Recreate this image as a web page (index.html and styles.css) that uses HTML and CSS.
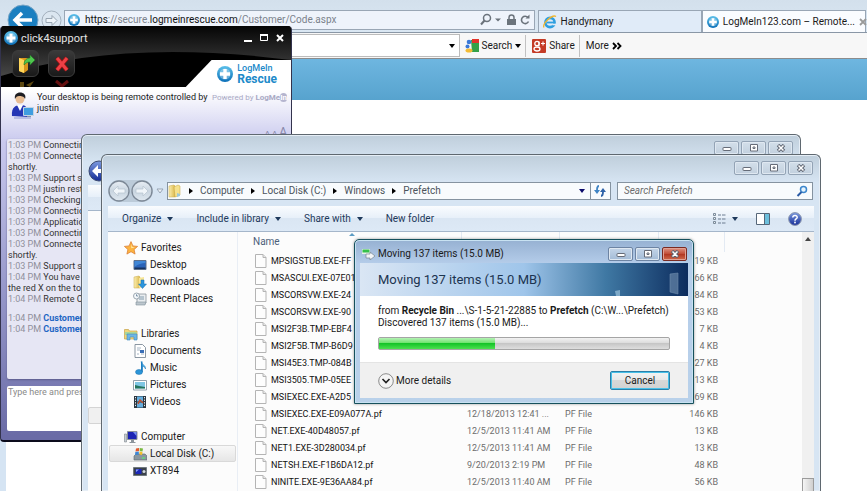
FILE: index.html
```html
<!DOCTYPE html>
<html lang="en">
  <head>
    <meta charset="UTF-8" />
    <title>Remote desktop</title>
    <link rel="stylesheet" href="styles.css">
  </head>
  <body>
    <!-- shared icons -->
    <svg class="sprite">
      <defs>
        <linearGradient id="blueBall" x1="0" y1="0" x2="0" y2="1">
          <stop offset="0" stop-color="#5cc0ea" />
          <stop offset="1" stop-color="#0b6fb8" />
        </linearGradient>
        <linearGradient id="helpBall" x1="0" y1="0" x2="0" y2="1">
          <stop offset="0" stop-color="#7d9be0" />
          <stop offset="1" stop-color="#142c96" />
        </linearGradient>
        <linearGradient id="glass" x1="0" y1="0" x2="0" y2="1">
          <stop offset="0" stop-color="#e9eff5" />
          <stop offset="0.5" stop-color="#c9d5e0" />
          <stop offset="1" stop-color="#dfe8f0" />
        </linearGradient>
        <linearGradient id="folder" x1="0" y1="0" x2="1" y2="0">
          <stop offset="0" stop-color="#fbeeb0" />
          <stop offset="1" stop-color="#dcb94c" />
        </linearGradient>
        <linearGradient id="headerTop" x1="0" y1="0" x2="0" y2="1">
          <stop offset="0" stop-color="#050505" />
          <stop offset="1" stop-color="#474747" />
        </linearGradient>
      </defs>
      <symbol id="plus" viewBox="0 0 16 16">
        <circle cx="8" cy="8" r="8" fill="url(#blueBall)" />
        <circle cx="8" cy="8" r="5.600" fill="#e8f6fd" opacity="0.35" />
        <path d="M6.300 3h3.400v3.300H13v3.400H9.700V13H6.300V9.700H3V6.300h3.300z" fill="#fff" />
      </symbol>
      <symbol id="min" viewBox="0 0 12 8">
        <rect x="2" y="3.500" width="8" height="3" rx="0.500" fill="#fff" stroke="#666c78" />
      </symbol>
      <symbol id="max" viewBox="0 0 12 8">
        <path d="M2.500 0.500h7v6.500h-7z" fill="#fff" stroke="#666c78" />
        <path d="M5 3h2v1.500H5z" fill="#fff" stroke="#666c78" />
      </symbol>
      <symbol id="close" viewBox="0 0 12 8">
        <path d="M3 1l6 6M9 1l-6 6" stroke="#5d6370" stroke-width="3.400" />
        <path d="M3.500 1.500l5 5M8.500 1.500l-5 5" stroke="#fff" stroke-width="1.500" />
      </symbol>
      <symbol id="page" viewBox="0 0 12 14">
        <path d="M0.500 0.500h7.500l3 3v10h-10.500z" fill="#fdfdfd" stroke="#b4b4b4" />
        <path d="M8 0.500v3h3" fill="#e6e6e6" stroke="#b4b4b4" />
      </symbol>
      <symbol id="folderIcon" viewBox="0 0 14 14">
        <path d="M1 2l5-1 1 1v11H1z" fill="url(#folder)" stroke="#c9a94a" stroke-width="0.500" />
        <path d="M6 3l4-2 2 1v9l-5 2z" fill="#f6e28d" stroke="#c4a23e" stroke-width="0.500" />
        <path d="M9 9l3 1v2l-3 1z" fill="#9cc8d8" />
      </symbol>
      <symbol id="star" viewBox="0 0 14 14">
        <path d="M7 0.600l1.900 4.300 4.700 0.500-3.500 3.100 1 4.600L7 10.700l-4.100 2.400 1-4.600L0.400 5.400l4.700-0.500z" fill="#fcb340" stroke="#d9762a" stroke-width="0.700" />
        <path d="M7 2.800l1 3 2.800 0.400-3.500 1z" fill="#ffe9a8" />
      </symbol>
      <symbol id="desktop" viewBox="0 0 14 14">
        <path d="M1 2.500h12v9H1z" fill="#2a63b8" stroke="#5c6f8a" />
        <path d="M1.500 3h11v2c-4 0-7 1-11 4z" fill="#3f86d6" />
        <path d="M1.500 9.500h11V11h-11z" fill="#16335f" />
      </symbol>
      <symbol id="download" viewBox="0 0 14 14">
        <path d="M1 2l5-1 1 1v11H1z" fill="url(#folder)" stroke="#c9a94a" stroke-width="0.500" />
        <path d="M6 3l5-1v9l-5 2z" fill="#f8e596" />
        <path d="M8 5h3v4h2.500L9.500 13.500 5.500 9H8z" fill="#2b95dd" stroke="#1468a8" stroke-width="0.500" />
      </symbol>
      <symbol id="recent" viewBox="0 0 14 14">
        <path d="M4 2h9v9H4z" fill="#e9edf0" stroke="#8a949c" stroke-width="0.800" />
        <path d="M6 4h5v4H6z" fill="#b5c4cf" />
        <path d="M3 10h10l-1 3H3z" fill="#bcc6cd" stroke="#82909a" stroke-width="0.600" />
        <circle cx="3.500" cy="4" r="3" fill="#f4f8fb" stroke="#8996a0" stroke-width="0.800" />
        <path d="M3.500 2.300V4H5" fill="none" stroke="#4b6a86" stroke-width="0.700" />
      </symbol>
      <symbol id="library" viewBox="0 0 14 14">
        <path d="M0.500 2.500h4l1 1.500h7.500v8H0.500z" fill="#f2d67a" stroke="#c7a447" stroke-width="0.700" />
        <path d="M1 5h11.500v3H1z" fill="#a8d69c" />
        <path d="M3 7h10v6H10v-3H6v3H3z" fill="#6fb6e4" stroke="#3d8ac0" stroke-width="0.600" />
      </symbol>
      <symbol id="document" viewBox="0 0 14 14">
        <path d="M2 0.500h7.500l3 3v10H2z" fill="#fff" stroke="#7e8b97" stroke-width="0.900" />
        <path d="M4 4h4M4 6h3M4 10h2M8 10h3" stroke="#a6b5c4" />
        <path d="M7 6h4v3H7z" fill="#3a6fb7" />
      </symbol>
      <symbol id="music" viewBox="0 0 14 14">
        <path d="M8 0.500c0.500 3 5 3.500 4.500 7.500-1-2-2-2.700-3-2.700V11" fill="#4fb0e8" stroke="#1b71ae" stroke-width="0.500" />
        <path d="M8 0.500h1.500V11H8z" fill="#1b7fc4" />
        <ellipse cx="6" cy="11" rx="3.500" ry="2.500" fill="#2b95d8" stroke="#1b71ae" stroke-width="0.500" />
      </symbol>
      <symbol id="picture" viewBox="0 0 14 14">
        <path d="M0.500 2.500h13v9.500H0.500z" fill="#fff" stroke="#8796a4" stroke-width="0.900" />
        <path d="M2 4h10v6.500H2z" fill="#7fc6e4" />
        <path d="M2 7l4 1 6 1v1.500H2z" fill="#23745e" />
      </symbol>
      <symbol id="video" viewBox="0 0 14 14">
        <path d="M1 1h12v12H1z" fill="#2b3640" />
        <path d="M4 1.500h6v5H4zM4 7.500h6v5H4z" fill="#65aede" />
        <path d="M2.500 2v10M11.500 2v10" stroke="#e8edf0" stroke-dasharray="1.300 1.300" />
        <path d="M5 9l2-4 3 3" fill="none" stroke="#c1502e" stroke-width="1.500" />
      </symbol>
      <symbol id="computer" viewBox="0 0 14 14">
        <path d="M3.500 1.500h9.500v8H3.500z" fill="#1c24b4" stroke="#8b929a" />
        <path d="M9 2h3.500v4z" fill="#7590f0" />
        <path d="M7 10h3v2H7zM5.500 12h6v1h-6z" fill="#8d959c" />
        <path d="M0.500 4h2v8h-2z" fill="#c6cdd2" stroke="#7f888f" stroke-width="0.600" />
      </symbol>
      <symbol id="disk" viewBox="0 0 14 14">
        <path d="M1 9l2-2h9l2 2v4H1z" fill="#8a979f" stroke="#58666e" stroke-width="0.600" />
        <path d="M9 11h3" stroke="#5fe07c" stroke-width="1.400" />
        <path d="M3 1.500l3-0.500v3l-3.500 0.500z" fill="#e2582d" />
        <path d="M6.700 1l3.300 0.500-0.500 3-2.800-0.500z" fill="#79b940" />
        <path d="M2.300 5l3.500-0.500v3L2 8z" fill="#3a86d6" />
        <path d="M6.500 4.500l3 0.500-0.500 3-2.500-0.500z" fill="#f4bf2d" />
      </symbol>
      <symbol id="camera" viewBox="0 0 14 14">
        <path d="M0.500 3.500h13v8H0.500z" fill="#3b424a" stroke="#70787f" />
        <path d="M2.500 5h6v5h-6z" fill="#1c28b8" />
        <path d="M3 5.500h3L3 8z" fill="#8da4f4" />
        <circle cx="11" cy="7.500" r="1.500" fill="#cfd6dc" />
      </symbol>
      <symbol id="navLeft" viewBox="0 0 22 22">
        <circle cx="11" cy="11" r="10" fill="url(#glass)" stroke="#7c8896" stroke-width="1.300" />
        <path d="M5 11l5-5v3h7v4h-7v3z" fill="#f0f5f9" stroke="#b6c3cf" stroke-width="0.700" />
      </symbol>
      <symbol id="navRight" viewBox="0 0 22 22">
        <circle cx="11" cy="11" r="10" fill="url(#glass)" stroke="#7c8896" stroke-width="1.300" />
        <path d="M17 11l-5-5v3H5v4h7v3z" fill="#f0f5f9" stroke="#b6c3cf" stroke-width="0.700" />
      </symbol>
    </svg>

    <div class="desktop">
      <!-- Internet Explorer -->
      <div class="browser">
        <header class="browser-top">
          <div class="browser-nav">
            <button class="nav-btn" aria-label="Back">
              <svg width="32" height="32" viewBox="0 0 32 32">
                <circle cx="16" cy="16" r="15" fill="#1b7fc0" stroke="#7aa6c6" />
                <path d="M25 16H9M15 9l-7 7 7 7" fill="none" stroke="#fff" stroke-width="3.500" />
              </svg>
            </button>
            <button class="nav-btn" aria-label="Forward">
              <svg width="21" height="21" viewBox="0 0 21 21">
                <circle cx="10.500" cy="10.500" r="9.500" fill="#dbe6f0" stroke="#a3b0bd" />
                <path d="M16 10.500l-5-5v3H5v4h6v3z" fill="#eef4f9" stroke="#97a4b1" />
              </svg>
            </button>
          </div>
          <div class="address">
            <svg class="ico12"><use href="#plus" /></svg>
            <span class="url">https<i>://secure.</i>logmeinrescue.com<i>/Customer/Code.aspx</i></span>
            <svg width="52" height="14" viewBox="0 0 52 14">
              <circle cx="8" cy="5" r="3.500" fill="none" stroke="#6b737c" stroke-width="1.500" />
              <path d="M5.500 7.500L2 11.500" stroke="#6b737c" stroke-width="2" />
              <path d="M16 5.500h6l-3 3z" fill="#6b737c" />
              <path d="M28 6h9v6h-9z" fill="#6b737c" />
              <path d="M30 6V4.500a2.500 2.500 0 0 1 5 0V6" fill="none" stroke="#6b737c" stroke-width="1.500" />
              <path d="M49 4.500A3.700 3.700 0 1 0 49.500 8.500" fill="none" stroke="#6b737c" stroke-width="1.600" />
              <path d="M50.500 1.500v4h-4z" fill="#6b737c" />
            </svg>
          </div>
          <a class="tab" href="#">
            <svg width="14" height="14" viewBox="0 0 14 14">
              <circle cx="7" cy="7.500" r="4.600" fill="none" stroke="#2e9fe0" stroke-width="2.600" />
              <path d="M4 7.500h8" stroke="#2e9fe0" stroke-width="1.800" />
              <path d="M9.500 9.500h4" stroke="#e2ecf6" stroke-width="1.600" />
              <path d="M1 12.500C-1 9 9-1 13 1.500" fill="none" stroke="#f0b52e" stroke-width="1.300" />
            </svg>
            <span>Handymany</span>
          </a>
          <a class="tab active" href="#">
            <svg class="ico12"><use href="#plus" /></svg>
            <span>LogMeIn123.com – Remote...</span>
            <svg width="8" height="8" viewBox="0 0 8 8">
              <path d="M1 1l6 6M7 1L1 7" stroke="#9a9a9a" stroke-width="1.800" />
            </svg>
          </a>
        </header>
        <div class="google-bar">
          <div class="combo">
            <input type="text" aria-label="Google search" />
            <i class="caret black"></i>
          </div>
          <button class="bar-btn">
            <svg width="14" height="14" viewBox="0 0 14 14">
              <path d="M6 1h8v12H7z" fill="#34a148" />
              <path d="M7 0h7v4H7z" fill="#e3342b" />
              <circle cx="4" cy="3" r="2.300" fill="#3a78d8" />
              <circle cx="2.500" cy="7.500" r="2" fill="#3a78d8" />
              <ellipse cx="4" cy="11.500" rx="3.500" ry="2" fill="#f3bb35" />
            </svg>
            Search <i class="caret black"></i>
          </button>
          <span class="bar-sep"></span>
          <button class="bar-btn">
            <svg width="14" height="14" viewBox="0 0 14 14">
              <rect width="14" height="14" rx="1" fill="#c43b26" />
              <circle cx="5" cy="4.500" r="2.200" fill="none" stroke="#fff" stroke-width="1.300" />
              <ellipse cx="5" cy="10" rx="3" ry="2" fill="none" stroke="#fff" stroke-width="1.300" />
              <path d="M7 2.500v5M9 4.500h4M11 2.500v4" stroke="#fff" stroke-width="1.100" />
            </svg>
            Share
          </button>
          <span class="bar-sep"></span>
          <button class="bar-btn">More
            <svg width="10" height="8" viewBox="0 0 10 8">
              <path d="M1 1l3 3-3 3M5.500 1l3 3-3 3" fill="none" stroke="#000" stroke-width="1.800" />
            </svg>
          </button>
        </div>
        <main class="page">
          <div class="banner"></div>
        </main>
      </div>

      <!-- click4support chat -->
      <section class="support">
        <header class="support-head">
          <svg class="support-bg" viewBox="0 0 292 61" preserveAspectRatio="none">
            <path d="M0 0h292v61H0z" fill="#000" />
            <path d="M0 0h292v34Q120 12 0 50z" fill="url(#headerTop)" />
            <path d="M186 61l26-27h80v27z" fill="#fff" />
          </svg>
          <div class="support-title">
            <svg class="ico14"><use href="#plus" /></svg>
            <span>click4support</span>
            <svg width="42" height="10" viewBox="0 0 42 10">
              <path d="M1 8h8" stroke="#fff" stroke-width="2" />
              <path d="M17.500 1.500h7v6h-7z" fill="none" stroke="#fff" />
              <path d="M17 2h8" stroke="#fff" stroke-width="2" />
              <path d="M34 2l6 6M40 2l-6 6" stroke="#fff" stroke-width="2" />
            </svg>
          </div>
          <div class="support-tools">
            <button class="tool" aria-label="Send file">
              <svg width="18" height="20" viewBox="0 0 18 20">
                <path d="M2 4h9v12l-4 3-5-2z" fill="#d9951c" />
                <path d="M2 4l5 2v13l-5-2z" fill="#ffd65a" />
                <path d="M7 11c0-5 3-7 6-7V1l5 5-5 5V8c-3 0-4 1-6 3z" fill="#4fc64e" stroke="#237c29" stroke-width="0.600" />
              </svg>
            </button>
            <button class="tool" aria-label="End session">
              <svg width="18" height="18" viewBox="0 0 18 18">
                <path d="M4 3l10 12M14 3L4 15" stroke="#9c1212" stroke-width="4.600" />
                <path d="M4 3l10 12M14 3L4 15" stroke="#ec4046" stroke-width="3" />
              </svg>
            </button>
            <div class="rescue">
              <svg class="ico16"><use href="#plus" /></svg>
              <div><small>LogMeIn</small><strong>Rescue</strong></div>
            </div>
          </div>
          <svg class="reflection" viewBox="0 0 80 8">
            <path d="M19 8V3h4v5M25 6l8-4-4 6" fill="#5c4710" />
            <path d="M55 2l6 5 6-5" fill="none" stroke="#65100f" stroke-width="3" />
          </svg>
        </header>
        <div class="support-info">
          <svg width="24" height="30" viewBox="0 0 24 30">
            <path d="M1 24c-1-9 4-11 9-11s8 3 7 12z" fill="#2536b5" />
            <path d="M6 13l3 6 3-6z" fill="#fff" />
            <circle cx="9" cy="7" r="4.500" fill="#e8bd94" />
            <path d="M4 7C2-2 17-1 14 7c-1-3-4-3-6-3-2 0-3 1-4 3z" fill="#1d1d22" />
            <path d="M12.500 15.500h10v8h-10z" fill="#3f9de0" stroke="#c5d4e2" />
            <path d="M16 24h4v2h-4z" fill="#7f93ab" />
            <path d="M3 26h17" stroke="#b8bde4" stroke-width="2" />
          </svg>
          <p>Your desktop is being remote controlled by<br>justin</p>
          <div class="powered">
            <span>Powered by <b>LogMe<em>In</em></b></span>
            <span class="sizes"><i>A</i><i>A</i><i>A</i></span>
          </div>
        </div>
        <ul class="chat">
          <li><time>1:03 PM</time> Connecting</li>
          <li><time>1:03 PM</time> Connected<br>shortly.</li>
          <li><time>1:03 PM</time> Support s...</li>
          <li><time>1:03 PM</time> justin rest...</li>
          <li><time>1:03 PM</time> Checking</li>
          <li><time>1:03 PM</time> Connection</li>
          <li><time>1:03 PM</time> Application</li>
          <li><time>1:03 PM</time> Connecting</li>
          <li><time>1:03 PM</time> Connected<br>shortly.</li>
          <li><time>1:03 PM</time> Support s...</li>
          <li><time>1:04 PM</time> You have<br>the red X on the to...</li>
          <li><time>1:04 PM</time> Remote C...</li>
          <li class="customer"><time>1:04 PM</time> <b>Customer</b></li>
          <li><time>1:04 PM</time> <b>Customer</b></li>
        </ul>
        <textarea class="chat-input" aria-label="Message" placeholder="Type here and press"></textarea>
      </section>

      <!-- explorer window at the back -->
      <section class="explorer explorer-back">
        <div class="win-btns">
          <button aria-label="Minimize"><svg><use href="#min" /></svg></button>
          <button aria-label="Maximize"><svg><use href="#max" /></svg></button>
          <button aria-label="Close"><svg><use href="#close" /></svg></button>
        </div>
        <div class="back-nav">
          <svg width="22" height="22" viewBox="0 0 22 22">
            <circle cx="11" cy="11" r="10" fill="url(#helpBall)" stroke="#3b4a72" />
            <path d="M4 11l6-6v4h7v4h-7v4z" fill="#fff" />
          </svg>
        </div>
        <div class="commands"></div>
        <div class="back-body"><span class="back-row"></span></div>
      </section>

      <!-- explorer window: Prefetch -->
      <section class="explorer explorer-front">
        <div class="win-btns">
          <button aria-label="Minimize"><svg><use href="#min" /></svg></button>
          <button aria-label="Maximize"><svg><use href="#max" /></svg></button>
          <button aria-label="Close"><svg><use href="#close" /></svg></button>
        </div>
        <div class="path-row">
          <div class="round-nav">
            <button class="nav-btn" aria-label="Back"><svg><use href="#navLeft" /></svg></button>
            <button class="nav-btn" aria-label="Forward"><svg><use href="#navRight" /></svg></button>
          </div>
          <svg width="8" height="6" viewBox="0 0 8 6"><path d="M1 1h6l-3 4z" fill="#eef3f8" stroke="#98a5b4" /></svg>
          <div class="path">
            <svg class="ico14"><use href="#folderIcon" /></svg>
            <i class="arrow"></i><a href="#">Computer</a>
            <i class="arrow"></i><a href="#">Local Disk (C:)</a>
            <i class="arrow"></i><a href="#">Windows</a>
            <i class="arrow"></i><a href="#">Prefetch</a>
            <i class="caret navy"></i>
            <button class="refresh" aria-label="Refresh">
              <svg width="12" height="12" viewBox="0 0 12 12">
                <path d="M5 1C3 1 3 3 3 6" fill="none" stroke="#3f84c4" stroke-width="1.800" />
                <path d="M0 5h6L3 9z" fill="#3f84c4" />
                <path d="M7 11c2 0 2-2 2-4" fill="none" stroke="#2d62a8" stroke-width="1.800" />
                <path d="M6 7h6L9 3z" fill="#2d62a8" />
              </svg>
            </button>
          </div>
          <div class="search">
            <input type="text" aria-label="Search Prefetch" placeholder="Search Prefetch" />
            <svg width="12" height="12" viewBox="0 0 12 12">
              <circle cx="7.500" cy="4.500" r="3" fill="#e6f4fd" stroke="#3c86cc" stroke-width="1.500" />
              <path d="M5.500 7L1.500 11" stroke="#2a5ba6" stroke-width="2" />
            </svg>
          </div>
        </div>
        <div class="commands">
          <button>Organize <i class="caret"></i></button>
          <button>Include in library <i class="caret"></i></button>
          <button>Share with <i class="caret"></i></button>
          <button>New folder</button>
          <div class="views">
            <button aria-label="Change view">
              <svg width="13" height="12" viewBox="0 0 13 12">
                <path d="M0.500 0.500h2v2h-2zM0.500 4.500h2v2h-2zM0.500 8.500h2v2h-2z" fill="#e9eef3" stroke="#71808f" stroke-width="0.900" />
                <path d="M5 2h3M9 2h3.500M5 6h3M9 6h3.500M5 10h3M9 10h3.500" stroke="#6c7d91" />
              </svg>
              <i class="caret"></i>
            </button>
            <button aria-label="Preview pane">
              <svg width="14" height="12" viewBox="0 0 14 12">
                <path d="M0.500 0.500h13v11H0.500z" fill="#fff" stroke="#566779" />
                <path d="M9 1h4v10H9z" fill="#6cbfdc" />
                <path d="M8.500 1v10" stroke="#566779" />
              </svg>
            </button>
            <button aria-label="Help">
              <svg width="14" height="14" viewBox="0 0 14 14">
                <circle cx="7" cy="7" r="6.400" fill="url(#helpBall)" stroke="#8e99ae" />
                <path d="M4.800 5.500c0-3 4.600-2.500 4.400 0C9 7 7 7 7 8.700" fill="none" stroke="#fff" stroke-width="1.500" />
                <circle cx="7" cy="10.500" r="0.900" fill="#fff" />
              </svg>
            </button>
          </div>
        </div>
        <div class="explorer-body">
          <nav class="tree">
            <ul>
              <li class="root"><svg><use href="#star" /></svg>Favorites</li>
              <li><svg><use href="#desktop" /></svg>Desktop</li>
              <li><svg><use href="#download" /></svg>Downloads</li>
              <li><svg><use href="#recent" /></svg>Recent Places</li>
            </ul>
            <ul>
              <li class="root"><svg><use href="#library" /></svg>Libraries</li>
              <li><svg><use href="#document" /></svg>Documents</li>
              <li><svg><use href="#music" /></svg>Music</li>
              <li><svg><use href="#picture" /></svg>Pictures</li>
              <li><svg><use href="#video" /></svg>Videos</li>
            </ul>
            <ul>
              <li class="root"><svg><use href="#computer" /></svg>Computer</li>
              <li class="selected"><svg><use href="#disk" /></svg>Local Disk (C:)</li>
              <li><svg><use href="#camera" /></svg>XT894</li>
            </ul>
          </nav>
          <div class="list">
            <table class="files">
              <thead>
                <tr>
                  <th class="col-name">Name<i class="sort"></i></th>
                  <th class="col-date"></th>
                  <th class="col-type"></th>
                  <th class="col-size"></th>
                  <th></th>
                </tr>
              </thead>
              <tbody>
                <tr><td><svg><use href="#page" /></svg>MPSIGSTUB.EXE-FF</td><td></td><td></td><td>19 KB</td><td></td></tr>
                <tr><td><svg><use href="#page" /></svg>MSASCUI.EXE-07E01</td><td></td><td></td><td>66 KB</td><td></td></tr>
                <tr><td><svg><use href="#page" /></svg>MSCORSVW.EXE-24</td><td></td><td></td><td>84 KB</td><td></td></tr>
                <tr><td><svg><use href="#page" /></svg>MSCORSVW.EXE-90</td><td></td><td></td><td>53 KB</td><td></td></tr>
                <tr><td><svg><use href="#page" /></svg>MSI2F3B.TMP-EBF4</td><td></td><td></td><td>7 KB</td><td></td></tr>
                <tr><td><svg><use href="#page" /></svg>MSI2F5B.TMP-B6D9</td><td></td><td></td><td>4 KB</td><td></td></tr>
                <tr><td><svg><use href="#page" /></svg>MSI45E3.TMP-084B</td><td></td><td></td><td>27 KB</td><td></td></tr>
                <tr><td><svg><use href="#page" /></svg>MSI3505.TMP-05EE</td><td></td><td></td><td>13 KB</td><td></td></tr>
                <tr><td><svg><use href="#page" /></svg>MSIEXEC.EXE-A2D5</td><td></td><td></td><td>69 KB</td><td></td></tr>
                <tr><td><svg><use href="#page" /></svg>MSIEXEC.EXE-E09A077A.pf</td><td>12/18/2013 12:41 ...</td><td>PF File</td><td>146 KB</td><td></td></tr>
                <tr><td><svg><use href="#page" /></svg>NET.EXE-40D48057.pf</td><td>12/5/2013 11:41 AM</td><td>PF File</td><td>13 KB</td><td></td></tr>
                <tr><td><svg><use href="#page" /></svg>NET1.EXE-3D280034.pf</td><td>12/5/2013 11:41 AM</td><td>PF File</td><td>13 KB</td><td></td></tr>
                <tr><td><svg><use href="#page" /></svg>NETSH.EXE-F1B6DA12.pf</td><td>9/20/2013 2:19 PM</td><td>PF File</td><td>48 KB</td><td></td></tr>
                <tr><td><svg><use href="#page" /></svg>NINITE.EXE-9E36AA84.pf</td><td>12/5/2013 11:40 AM</td><td>PF File</td><td>56 KB</td><td></td></tr>
              </tbody>
            </table>
          </div>
          <div class="scrollbar"><i class="up"></i><span class="thumb"></span></div>
        </div>
      </section>

      <!-- move progress dialog -->
      <section class="dialog">
        <div class="dialog-title">
          <svg width="13" height="12" viewBox="0 0 13 12">
            <path d="M0 1h8v5H0z" fill="#e9f3e9" />
            <path d="M0.500 1.500h7v3h-7z" fill="#35c04a" />
            <path d="M4 6h4V4l5 4-5 4v-2H4z" fill="#f2f5f7" stroke="#77858f" stroke-width="0.700" />
          </svg>
          <span>Moving 137 items (15.0 MB)</span>
          <div class="dialog-btns">
            <button aria-label="Minimize"><svg><use href="#min" /></svg></button>
            <button aria-label="Maximize" disabled><svg><use href="#max" /></svg></button>
            <button class="red" aria-label="Close"><svg><use href="#close" /></svg></button>
          </div>
        </div>
        <h1 class="dialog-head">
          Moving 137 items (15.0 MB)
          <svg width="76" height="33" viewBox="0 0 76 33">
            <path d="M58 11l8-1v21l-8-2z" fill="#7f9cba" opacity="0.55" stroke="#b9d0e4" stroke-width="0.600" />
            <path d="M4 33l-1-5 5-1v6z" fill="#9cc3dc" opacity="0.700" />
          </svg>
        </h1>
        <div class="dialog-main">
          <p>from <b>Recycle Bin</b> ...\S-1-5-21-22885 to <b>Prefetch</b> (C:\W...\Prefetch)</p>
          <p>Discovered 137 items (15.0 MB)...</p>
          <div class="progress" role="progressbar" aria-valuenow="40"><span style="width: 40%"></span></div>
        </div>
        <footer class="dialog-foot">
          <button class="more">
            <svg width="16" height="16" viewBox="0 0 16 16">
              <circle cx="8" cy="8" r="7.300" fill="#f4f4f4" stroke="#8b8b8b" />
              <path d="M4.500 6l3.500 3.500L11.500 6" fill="none" stroke="#222" stroke-width="1.700" />
            </svg>
            More details
          </button>
          <button class="cancel">Cancel</button>
        </footer>
      </section>
    </div>
  </body>
</html>
```
FILE: styles.css
```css
* {
  box-sizing: border-box;
}
html,
body {
  height: 100%;
  margin: 0;
}
body {
  font-family: Roboto, 'Open Sans', sans-serif;
  font-size: 10px;
  line-height: 12px;
  color: #1a1a1a;
}
ul,
p,
h1 {
  margin: 0;
  padding: 0;
  list-style: none;
}
button {
  font: inherit;
  color: inherit;
  padding: 0;
  border: none;
  background: none;
  display: flex;
  align-items: center;
}
input,
textarea {
  font: inherit;
  border: none;
  outline: none;
  padding: 0;
  background: transparent;
}
a {
  color: inherit;
  text-decoration: none;
}
svg {
  display: block;
  flex: none;
}
.sprite {
  position: absolute;
  width: 0;
  height: 0;
}
.ico12 {
  width: 12px;
  height: 12px;
}
.ico14 {
  width: 14px;
  height: 14px;
}
.ico16 {
  width: 16px;
  height: 16px;
}
.caret {
  border: 3px solid transparent;
  border-top: 4px solid #1e395b;
  border-bottom: none;
}
.caret.black {
  border-top-color: #000;
}
.caret.navy {
  border-top-color: #0a0a6a;
}

.desktop {
  position: relative;
  height: 100%;
  overflow: hidden;
}

/* browser */
.browser {
  height: 100%;
  display: flex;
  flex-direction: column;
  background: #fff;
}
.browser-top {
  display: flex;
  height: 33px;
  padding: 10px 1px 0 0;
  background: linear-gradient(#d3e0ec, #dae7f3);
  border-bottom: 1px solid #8a97a6;
}
.browser-nav {
  width: 64px;
  flex: none;
  display: flex;
  gap: 2px;
  height: 20px;
  align-items: center;
  padding-left: 7px;
}
.address {
  flex: 3 0 0;
  min-width: 0;
  height: 20px;
  display: flex;
  align-items: center;
  gap: 5px;
  padding: 0 3px;
  background: #eef3fb;
  border: 1px solid #99a6b5;
}
.url {
  flex: 1;
  color: #111;
  white-space: nowrap;
}
.url i {
  font-style: normal;
  color: #7b828b;
}
.tab {
  flex: 1 0 0;
  min-width: 0;
  display: flex;
  align-items: center;
  gap: 4px;
  padding: 0 4px;
  background: #e0ebf8;
  border: 1px solid #99a6b5;
  border-bottom: none;
  white-space: nowrap;
}
.address + .tab {
  margin-left: 3px;
}
.tab.active {
  background: #fafcff;
}
.tab span {
  flex: 1;
}
.google-bar {
  display: flex;
  align-items: center;
  height: 26px;
  background: #f7f7f7;
  border-bottom: 1px solid #8c8c8c;
}
.combo {
  width: 53%;
  height: 23px;
  display: flex;
  align-items: center;
  padding-right: 4px;
  margin-right: 5px;
  background: #fff;
  border: 1px solid #bcbcbc;
}
.combo input {
  flex: 1;
}
.bar-btn {
  gap: 3px;
}
.bar-sep {
  width: 1px;
  height: 22px;
  margin: 0 6px 0 4px;
  background: #c2c2c2;
}
.page {
  flex: 1;
  border-left: 6px solid #d5e4f3;
}
.banner {
  height: 41px;
  background: linear-gradient(#6eb6e0, #57a3ce);
}

/* click4support */
.support {
  position: absolute;
  left: 0;
  top: 26px;
  width: 292px;
  padding-bottom: 9px;
  font-size: 9px;
  line-height: 11px;
  border: 1px solid #33334d;
  border-top: none;
  border-bottom: 2px solid #0c0c1c;
  border-radius: 4px;
  overflow: hidden;
  background: linear-gradient(#fff 64px, #c9c9ee 116px, #9799cb 260px, #6a6ba6 410px);
}
.support-head {
  position: relative;
  height: 61px;
}
.support-bg {
  position: absolute;
  width: 100%;
  height: 100%;
}
.support-title {
  position: relative;
  display: flex;
  align-items: center;
  gap: 3px;
  height: 24px;
  padding: 0 6px 0 3px;
  font-size: 11px;
  color: #e4e4e4;
}
.support-title span {
  flex: 1;
}
.support-tools {
  position: relative;
  display: flex;
  gap: 9px;
  padding-left: 11px;
}
.tool {
  width: 27px;
  height: 27px;
  justify-content: center;
  border-radius: 6px;
  border: 1px solid #3c3c3c;
  background: linear-gradient(#3a3a3a, #191919);
}
.rescue {
  display: flex;
  align-items: center;
  gap: 4px;
  margin: 12px 14px 0 auto;
  height: 24px;
  color: #2089c9;
}
.rescue small,
.rescue strong {
  display: block;
  font-size: 9px;
  line-height: 10px;
  font-weight: 500;
}
.rescue strong {
  font-size: 12px;
  line-height: 12px;
  font-weight: 700;
}
.reflection {
  position: absolute;
  left: 0;
  bottom: 0;
  width: 80px;
  height: 8px;
}
.support-info {
  display: flex;
  gap: 2px;
  height: 52px;
  padding: 5px 4px 0 10px;
  white-space: nowrap;
}
.powered {
  display: flex;
  flex-direction: column;
  align-items: flex-end;
  justify-content: space-between;
  margin-left: auto;
  font-size: 8px;
  color: #a9a9c4;
}
.powered em {
  font-style: normal;
  color: #fff;
  background: #b5b5cf;
  border-radius: 5px;
}
.sizes {
  display: flex;
  align-items: baseline;
  gap: 2px;
  color: #8686a8;
}
.sizes i {
  font-style: normal;
}
.sizes i:last-child {
  font-size: 12px;
}
.chat {
  height: 240px;
  margin: 0 6px 7px;
  padding: 1px 1px;
  background: #e6e6f4;
  border-radius: 2px;
  box-shadow: 0 1px 2px #5c5c8c;
  color: #333;
}
.chat time {
  color: #8f8f9b;
}
.chat b {
  color: #1f66c4;
}
.chat .customer {
  margin-top: 8px;
}
.chat-input {
  display: block;
  width: calc(100% - 12px);
  height: 45px;
  margin: 0 6px;
  padding: 1px;
  resize: none;
  background: #fff;
  border-radius: 2px;
}
.chat-input::placeholder {
  color: #8a8a8a;
}

/* explorer */
.explorer {
  position: absolute;
  bottom: 0;
  display: flex;
  flex-direction: column;
  padding: 0 6px;
  border: 1px solid #5f6870;
  border-bottom: none;
  border-radius: 6px 6px 0 0;
  background: linear-gradient(#bfcedb, #d7e5f3 28px);
  box-shadow: inset 0 0 0 1px #e6eef6;
}
.explorer-back {
  left: 81px;
  right: 66px;
  top: 134px;
}
.explorer-front {
  left: 101px;
  right: 46px;
  top: 154px;
}
.win-btns,
.dialog-btns {
  display: flex;
  justify-content: flex-end;
  gap: 2px;
}
.win-btns {
  padding: 6px 1px 0 0;
}
.win-btns button,
.dialog-btns button {
  width: 25px;
  height: 14px;
  justify-content: center;
  border: 1px solid #93a3b5;
  border-radius: 2px;
  background: linear-gradient(#d3dfea, #c2d0de);
  box-shadow: inset 0 0 0 1px #dfe8f1;
}
.win-btns svg,
.dialog-btns svg {
  width: 12px;
  height: 8px;
}
.back-nav {
  height: 30px;
  padding: 5px 0;
}
.back-body {
  flex: 1;
  background: #fcfcfc;
}
.back-row {
  display: block;
  width: 130px;
  height: 17px;
  margin-top: 196px;
  border: 1px solid #d4d4d4;
  border-radius: 2px;
  background: #f0f0f0;
}
.path-row {
  display: flex;
  align-items: center;
  gap: 3px;
  height: 31px;
  padding-right: 1px;
}
.round-nav {
  display: flex;
  gap: 1px;
  border-radius: 11px;
  background: #bccbd9;
}
.round-nav svg {
  width: 22px;
  height: 22px;
}
.path,
.search {
  display: flex;
  align-items: center;
  height: 18px;
  background: #f8fbfd;
  border: 1px solid #8593a0;
}
.path {
  flex: 12 0 0;
  color: #4c545c;
  white-space: nowrap;
}
.arrow {
  margin: 0 7px;
  border: 3px solid transparent;
  border-left: 4px solid #000;
  border-right: none;
}
.path .caret {
  margin: 0 5px 0 auto;
}
.refresh {
  width: 20px;
  height: 16px;
  justify-content: center;
  border-left: 1px solid #8593a0;
}
.search {
  flex: 5 0 0;
  min-width: 0;
  margin-left: 3px;
  padding: 0 4px 0 6px;
}
.search input {
  flex: 1;
  min-width: 0;
}
.search input::placeholder {
  font-style: italic;
  color: #6d6d6d;
}
.commands {
  display: flex;
  flex: none;
  align-items: center;
  gap: 23px;
  height: 26px;
  padding: 0 12px 0 14px;
  color: #1e395b;
  border-bottom: 1px solid #a5b6ca;
  background: linear-gradient(#fafcfe, #e6eff9 50%, #dae6f3 50%, #dde9f6);
}
.commands button {
  gap: 6px;
}
.views {
  display: flex;
  gap: 18px;
  margin-left: auto;
}
.explorer-body {
  flex: 1;
  min-height: 0;
  display: flex;
  background: #fcfcfc;
}
.tree {
  width: 130px;
  flex: none;
  padding-top: 7px;
  border-right: 1px solid #e9eef5;
}
.tree ul {
  margin-bottom: 18px;
}
.tree li {
  display: flex;
  align-items: center;
  gap: 3px;
  height: 17px;
  padding-left: 23px;
  margin: 0 1px;
  border: 1px solid transparent;
}
.tree .root {
  padding-left: 14px;
}
.tree .selected {
  border-color: #d9d9d9;
  border-radius: 2px;
  background: linear-gradient(#f8f8f8, #e6e6e6);
}
.tree svg {
  width: 14px;
  height: 14px;
}
.list {
  flex: 1;
  overflow: hidden;
}
.files {
  width: 100%;
  table-layout: fixed;
  border-collapse: collapse;
  white-space: nowrap;
}
.files th {
  height: 20px;
  padding: 0 0 0 15px;
  text-align: left;
  font-weight: 400;
  color: #4c607a;
  border-right: 1px solid #e3eaf3;
}
.files th:last-child {
  border: none;
}
.col-name {
  width: 223px;
  position: relative;
}
.col-date {
  width: 98px;
}
.col-type {
  width: 99px;
}
.col-size {
  width: 66px;
}
.sort {
  position: absolute;
  top: 1px;
  left: 50%;
  border: 3px solid transparent;
  border-top: none;
  border-bottom: 3px solid #5d9cc4;
}
.files td {
  height: 17px;
  padding: 0 0 0 6px;
  font-size: 9px;
  color: #6d6d6d;
}
.files td:first-child {
  display: flex;
  align-items: center;
  gap: 4px;
  padding-left: 17px;
  color: #111;
}
.files td:nth-child(4) {
  padding: 0 6px 0 0;
  text-align: right;
}
.files svg {
  width: 12px;
  height: 14px;
}
.scrollbar {
  width: 12px;
  display: flex;
  flex-direction: column;
  align-items: center;
  justify-content: space-between;
  padding-top: 5px;
  background: #f0f0f0;
}
.up {
  border: 3px solid transparent;
  border-top: none;
  border-bottom: 4px solid #444;
}
.thumb {
  width: 12px;
  height: 13px;
  border: 1px solid #9b9b9b;
  border-bottom: none;
  background: linear-gradient(90deg, #f5f5f5, #cfcfcf);
}

/* progress dialog */
.dialog {
  position: absolute;
  left: 354px;
  right: 173px;
  top: 239px;
  padding: 0 5px 5px;
  border: 1px solid #16505c;
  border-radius: 5px 5px 0 0;
  background: linear-gradient(#96b1d2, #b5cdea 24px, #b9d1ea);
  box-shadow: inset 0 0 0 1px #c8e2f2, 0 0 3px rgba(0, 0, 0, 0.4);
}
.dialog-title {
  display: flex;
  align-items: center;
  gap: 3px;
  height: 23px;
  padding: 5px 1px 0 2px;
}
.dialog-btns {
  margin-left: auto;
}
.dialog-btns button {
  border-color: #6d84a3;
  background: linear-gradient(#c4d5e8, #a3bbd6);
}
.dialog-btns .red {
  border-color: #7a2a22;
  background: linear-gradient(#dd9384, #c04a35 50%, #b03420 50%, #cf6a4c);
  box-shadow: inset 0 0 0 1px #e0a195;
}
.dialog-head {
  display: flex;
  align-items: center;
  justify-content: space-between;
  height: 33px;
  padding-left: 18px;
  font-size: 13px;
  font-weight: 400;
  color: #1c3450;
  background: linear-gradient(90deg, #dae6f4, #9fc5ea 50%, #3f78a3 75%, #0c2c5e);
}
.dialog-main {
  padding: 9px 18px 12px;
  background: #fff;
  white-space: nowrap;
}
.progress {
  height: 13px;
  margin-top: 8px;
  border: 1px solid #a5a5a5;
  border-radius: 2px;
  background: linear-gradient(#f2f2f2, #dcdcdc 45%, #c6c6c6 50%, #dedede);
}
.progress span {
  display: block;
  height: 100%;
  background: linear-gradient(#b5f2b5, #6ee26e 45%, #14c428 50%, #4be04f);
}
.dialog-foot {
  display: flex;
  align-items: center;
  justify-content: space-between;
  height: 36px;
  padding: 0 18px;
  background: #f0f0f0;
  border-top: 1px solid #e4e4e4;
}
.more {
  gap: 2px;
}
.cancel {
  width: 60px;
  height: 19px;
  justify-content: center;
  border: 1px solid #2c7fa8;
  border-radius: 2px;
  background: linear-gradient(#f3f3f3, #e8e8e8 50%, #d8d8d8 50%, #d2d2d2);
  box-shadow: inset 0 0 0 1px #48c0e8;
}
```
